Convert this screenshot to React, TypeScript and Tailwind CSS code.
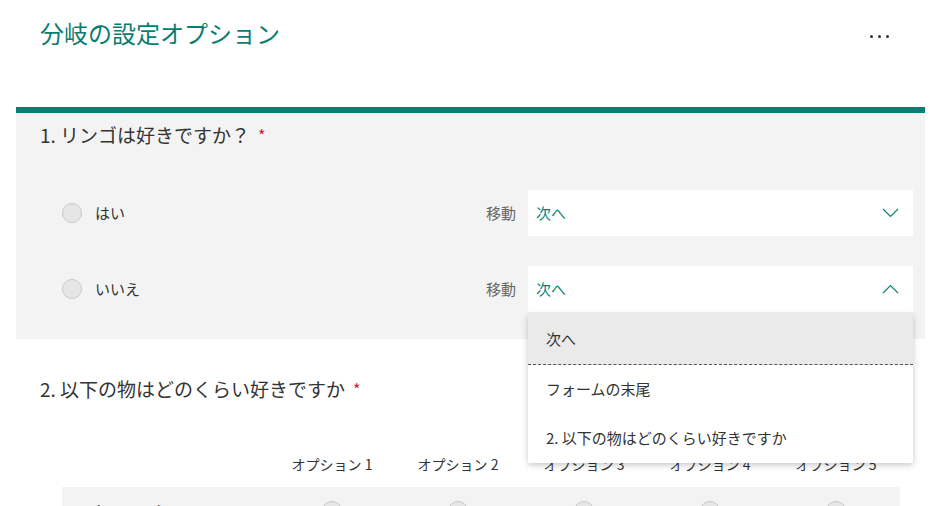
import React from "react";

// 分岐の設定 — 質問ごとの移動先を選ぶパネル（2 問目の一部まで表示）

const FONT = { fontFamily: '"Noto Sans CJK JP", "Noto Sans", sans-serif' };

function Radio() {
  return <span className="block h-5 w-5 shrink-0 rounded-full border border-[#c8c8c8] bg-[#e6e6e6]" />;
}

function Chevron({ up }: { up?: boolean }) {
  return (
    <svg width="17" height="10" viewBox="0 0 17 10" fill="none" className="shrink-0">
      <path d={up ? "M1 9 L8.5 1.5 L16 9" : "M1 1 L8.5 8.5 L16 1"} stroke="#0b8576" strokeWidth="1.2" />
    </svg>
  );
}

function BranchRow({ label, open }: { label: string; open?: boolean }) {
  return (
    <div className="flex h-[46px] items-center">
      <div className="flex w-[470px] items-center gap-[13px] pl-[46px]">
        <Radio />
        <span className="text-[15px] text-[#333]">{label}</span>
      </div>
      <span className="mr-3 text-[15px] text-[#666]">移動</span>
      <div className="flex h-[46px] w-[385px] items-center justify-between bg-white pl-2 pr-[14px]">
        <span className="text-[15px] text-[#0b8576]">次へ</span>
        <Chevron up={open} />
      </div>
    </div>
  );
}

const COLS = ["オプション 1", "オプション 2", "オプション 3", "オプション 4", "オプション 5"];

export default function App() {
  return (
    <div className="relative h-[506px] w-[949px] overflow-hidden bg-white" style={FONT}>
      <div className="flex h-[107px] items-start justify-between pl-10 pr-[60px] pt-[17px]">
        <h1 className="text-[24px] font-normal leading-8 text-[#0a7d72]">分岐の設定オプション</h1>
        <span className="flex gap-[5px] pt-[18px]">
          <i className="block h-[3px] w-[3px] rounded-full bg-[#333]" />
          <i className="block h-[3px] w-[3px] rounded-full bg-[#333]" />
          <i className="block h-[3px] w-[3px] rounded-full bg-[#333]" />
        </span>
      </div>

      <section className="ml-4 h-[232px] w-[909px] border-t-[6px] border-[#008272] bg-[#f3f3f3]">
        <div className="flex items-center pl-6 pt-[8px] text-[19px] leading-7 text-[#333]">
          <span>1. リンゴは好きですか？</span>
          <span className="ml-2 text-[16px] text-[#c4262e]">*</span>
        </div>
        <div className="mt-[41px] flex flex-col gap-[30px]">
          <BranchRow label="はい" />
          <BranchRow label="いいえ" open />
        </div>
      </section>

      <section className="ml-4 w-[909px]">
        <div className="flex items-center pl-6 pt-[36px] text-[19px] leading-7 text-[#333]">
          <span>2. 以下の物はどのくらい好きですか</span>
          <span className="ml-2 text-[16px] text-[#c4262e]">*</span>
        </div>
        <div className="ml-[46px] mt-[51px] w-[838px]">
          <div className="grid grid-cols-[207px_repeat(5,126px)] text-[14px] leading-5 text-[#333]">
            <span />
            {COLS.map((c) => (
              <span key={c} className="text-center">{c}</span>
            ))}
          </div>
          <div className="mt-[13px] grid h-[48px] grid-cols-[207px_repeat(5,126px)] items-start bg-[#f3f3f3] pt-[14px]">
            <span className="mt-[1px] pl-6 text-[15px] leading-5 text-[#333]">パイナップル</span>
            {COLS.map((c) => (
              <span key={c} className="flex justify-center">
                <Radio />
              </span>
            ))}
          </div>
        </div>
      </section>

      {/* 開いている移動先メニュー */}
      <div className="absolute left-[528px] top-[314px] w-[385px] bg-white shadow-[0_2px_6px_rgba(0,0,0,0.22)]">
        <div className="flex h-[51px] items-center border-b border-dashed border-[#555] bg-[#eaeaea] pl-[18px] text-[15px] text-[#333]">
          次へ
        </div>
        <div className="flex h-[48px] items-center pl-[18px] text-[15px] text-[#333]">フォームの末尾</div>
        <div className="flex h-[50px] items-center pl-[18px] text-[15px] text-[#333]">2. 以下の物はどのくらい好きですか</div>
      </div>
    </div>
  );
}
